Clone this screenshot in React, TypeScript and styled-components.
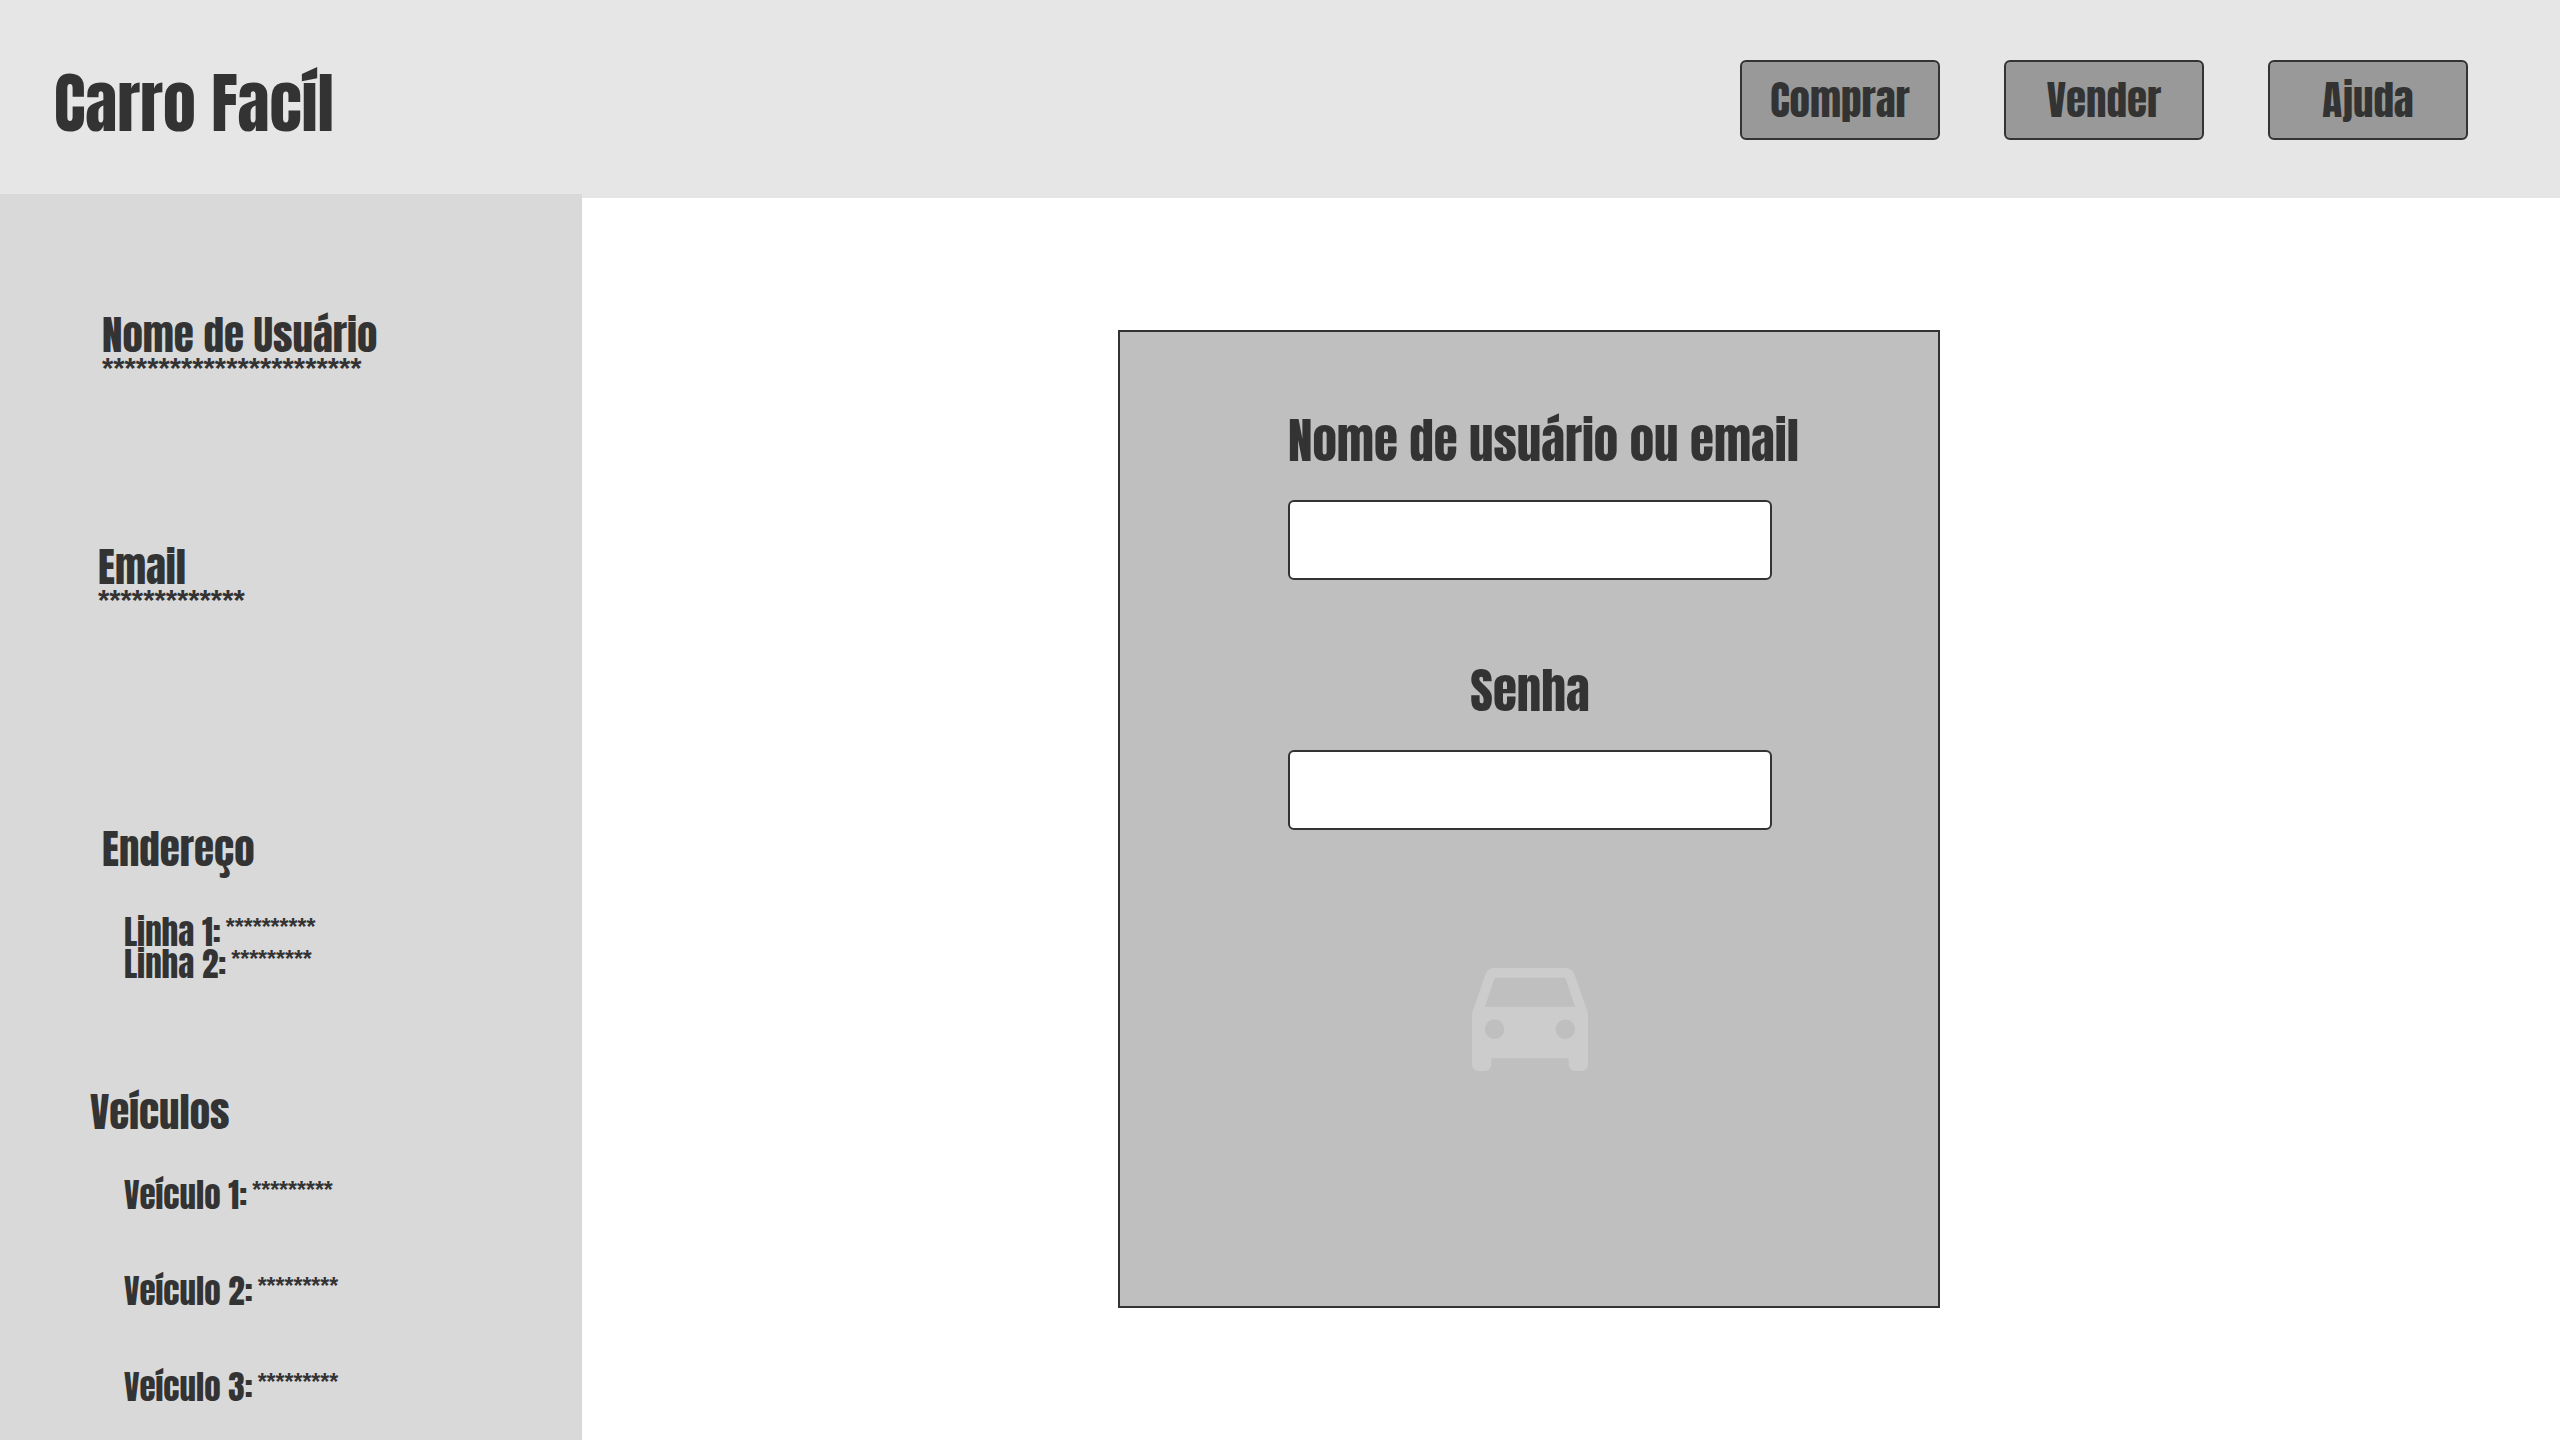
import React from 'react';
import styled, { createGlobalStyle } from 'styled-components';

const ink = '#333333';

const GlobalStyle = createGlobalStyle`
  *, *::before, *::after { box-sizing: border-box; }
  body {
    margin: 0;
    background: #ffffff;
    color: ${ink};
    font-family: Impact, Anton, Oswald, "Roboto Condensed", sans-serif;
    font-weight: 400;
  }
  h1, h2, p, ul, dl, dd, dt { margin: 0; padding: 0; font-weight: 400; }
`;

const Page = styled.div`
  display: flex;
  flex-direction: column;
  min-height: 100vh;
`;

const Header = styled.header`
  display: flex;
  align-items: flex-start;
  justify-content: space-between;
  height: 198px;
  padding: 60px 92px 0 54px;
  background: #e6e6e6;
`;

const Brand = styled.h1`
  padding-top: 11px;
  font-size: 66px;
  line-height: 64px;
  white-space: nowrap;
`;

const Nav = styled.nav`
  display: flex;
  gap: 64px;
`;

const NavButton = styled.button`
  width: 200px;
  height: 80px;
  padding: 0;
  border: 2px solid ${ink};
  border-radius: 6px;
  background: #999999;
  color: inherit;
  font-family: inherit;
  font-size: 41px;
  line-height: 40px;
  cursor: pointer;
`;

const Body = styled.div`
  display: flex;
  flex: 1;
`;

const Sidebar = styled.aside`
  width: 582px;
  flex-shrink: 0;
  margin-top: -4px;
  padding: 121px 48px 32px 90px;
  background: #d9d9d9;
`;

const Section = styled.section<{ $inset?: number; $space?: number }>`
  padding-left: ${p => p.$inset ?? 0}px;
  margin-bottom: ${p => p.$space ?? 0}px;
`;

const SectionTitle = styled.h2`
  font-size: 41px;
  line-height: 40px;
`;

const Masked = styled.p`
  font-family: "Liberation Sans", Arial, sans-serif;
  font-size: 29px;
  font-weight: 700;
  line-height: 26px;
`;

const DetailList = styled.dl<{ $gap: number; $inset: number }>`
  display: flex;
  flex-direction: column;
  gap: ${p => p.$gap}px;
  padding: 47px 0 0 ${p => p.$inset}px;
`;

const Detail = styled.div`
  display: flex;
  align-items: flex-start;
  gap: 5px;
  font-size: 33px;
  line-height: 32px;
`;

const DetailValue = styled.dd`
  font-family: "Liberation Sans", Arial, sans-serif;
  font-size: 23px;
  font-weight: 700;
  line-height: 22px;
`;

const Main = styled.main`
  display: flex;
  flex: 1;
  align-items: flex-start;
  justify-content: center;
  padding: 132px 40px;
`;

const LoginCard = styled.form`
  display: flex;
  flex-direction: column;
  align-items: center;
  width: 822px;
  min-height: 978px;
  margin-right: 84px;
  padding: 84px 0 0 2px;
  border: 2px solid ${ink};
  background: #bfbfbf;
`;

const Field = styled.div`
  display: flex;
  flex-direction: column;
  width: 484px;
  margin-bottom: 86px;
`;

const FieldLabel = styled.label`
  margin-bottom: 36px;
  font-size: 49px;
  line-height: 48px;
  text-align: center;
  white-space: nowrap;
`;

const FieldInput = styled.input`
  width: 100%;
  height: 80px;
  padding: 0 20px;
  border: 2px solid ${ink};
  border-radius: 6px;
  background: #ffffff;
  color: inherit;
  font-family: inherit;
  font-size: 33px;
`;

const CarIcon = styled.svg`
  width: 116px;
  height: 103px;
  margin-top: 52px;
  fill: #cccccc;
`;

const address = [
  { label: 'Linha 1:', value: '**********' },
  { label: 'Linha 2:', value: '*********' },
];

const vehicles = [
  { label: 'Veículo 1:', value: '*********' },
  { label: 'Veículo 2:', value: '*********' },
  { label: 'Veículo 3:', value: '*********' },
];

type Item = { label: string; value: string };

function Details({ items, gap, inset }: { items: Item[]; gap: number; inset: number }) {
  return (
    <DetailList $gap={gap} $inset={inset}>
      {items.map(item => (
        <Detail key={item.label}>
          <dt>{item.label}</dt>
          <DetailValue>{item.value}</DetailValue>
        </Detail>
      ))}
    </DetailList>
  );
}

export default function App() {
  return (
    <Page>
      <GlobalStyle />
      <Header>
        <Brand>Carro Facíl</Brand>
        <Nav>
          <NavButton type="button">Comprar</NavButton>
          <NavButton type="button">Vender</NavButton>
          <NavButton type="button">Ajuda</NavButton>
        </Nav>
      </Header>
      <Body>
        <Sidebar>
          <Section $inset={12} $space={166}>
            <SectionTitle>Nome de Usuário</SectionTitle>
            <Masked>***********************</Masked>
          </Section>
          <Section $inset={8} $space={216}>
            <SectionTitle>Email</SectionTitle>
            <Masked>*************</Masked>
          </Section>
          <Section $inset={12} $space={112}>
            <SectionTitle>Endereço</SectionTitle>
            <Details items={address} gap={0} inset={22} />
          </Section>
          <Section>
            <SectionTitle>Veículos</SectionTitle>
            <Details items={vehicles} gap={64} inset={34} />
          </Section>
        </Sidebar>
        <Main>
          <LoginCard>
            <Field>
              <FieldLabel htmlFor="usuario">Nome de usuário ou email</FieldLabel>
              <FieldInput id="usuario" type="text" />
            </Field>
            <Field>
              <FieldLabel htmlFor="senha">Senha</FieldLabel>
              <FieldInput id="senha" type="password" />
            </Field>
            <CarIcon viewBox="3 5 18 16" aria-hidden="true">
              <path d="M18.92 6.01C18.72 5.42 18.16 5 17.5 5h-11c-.66 0-1.21.42-1.42 1.01L3 12v8c0 .55.45 1 1 1h1c.55 0 1-.45 1-1v-1h12v1c0 .55.45 1 1 1h1c.55 0 1-.45 1-1v-8l-2.08-5.99zM6.5 16c-.83 0-1.5-.67-1.5-1.5S5.67 13 6.5 13s1.5.67 1.5 1.5S7.33 16 6.5 16zm11 0c-.83 0-1.5-.67-1.5-1.5s.67-1.5 1.5-1.5 1.5.67 1.5 1.5-.67 1.5-1.5 1.5zM5 11l1.5-4.5h11L19 11H5z" />
            </CarIcon>
          </LoginCard>
        </Main>
      </Body>
    </Page>
  );
}
